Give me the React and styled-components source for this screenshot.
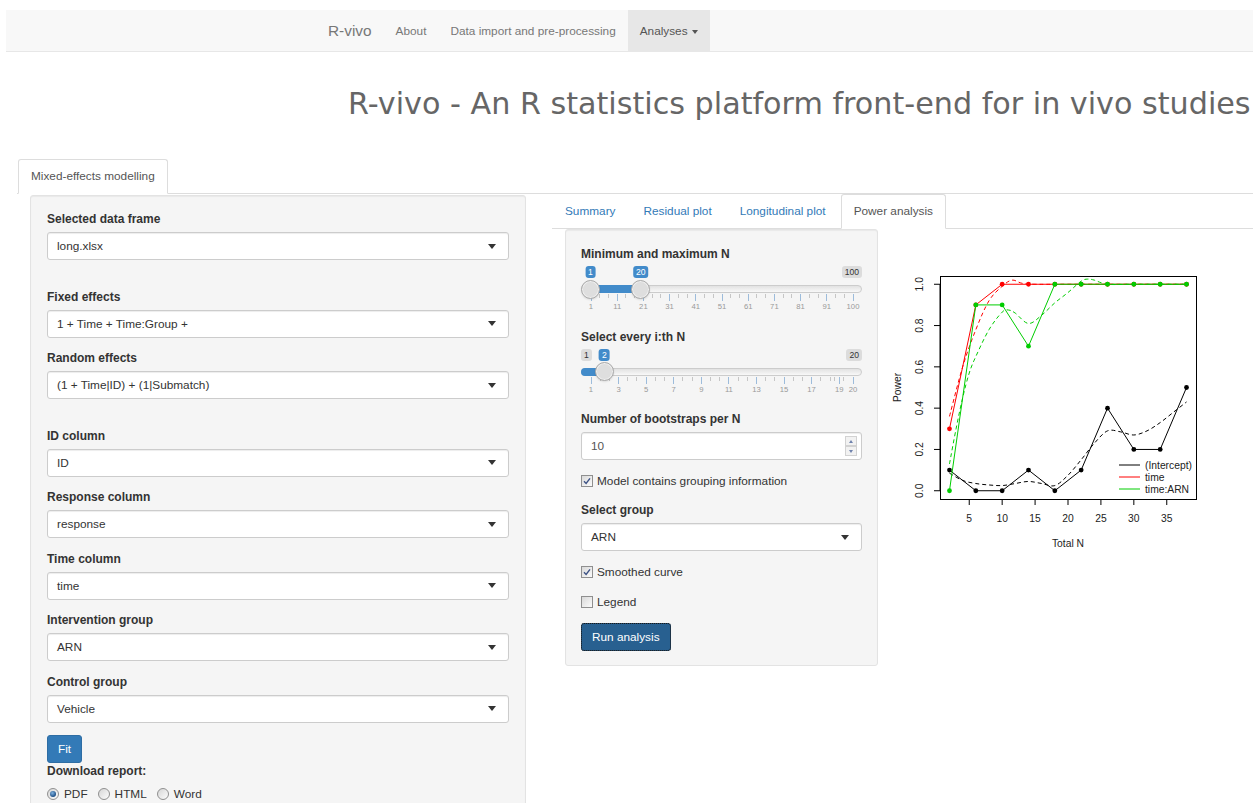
import React from 'react';
import styled, { createGlobalStyle } from 'styled-components';

const GlobalStyle = createGlobalStyle`
  html, body { margin: 0; padding: 0; background: #fff; overflow: hidden; }
  body {
    font-family: "Liberation Sans", Arial, sans-serif;
    font-size: 11.8px;
    color: #333;
  }
  * { box-sizing: border-box; }
`;

const Page = styled.div`
  padding-top: 10px;
  width: 1253px;
`;

/* ---------- navbar ---------- */
const Navbar = styled.nav`
  margin-left: 6px;
  height: 42px;
  display: flex;
  padding-left: 310px;
  background: #f8f8f8;
  border-bottom: 1px solid #e7e7e7;
`;

const Brand = styled.span`
  display: flex;
  align-items: center;
  padding: 0 12px;
  font-size: 15.4px;
  color: #777;
`;

const NavItem = styled.span`
  display: flex;
  align-items: center;
  padding: 0 12px;
  color: ${p => (p.$active ? '#555' : '#777')};
  background: ${p => (p.$active ? '#e7e7e7' : 'transparent')};
`;

const Caret = styled.span`
  display: inline-block;
  width: 0;
  height: 0;
  margin: 2px 0 0 4px;
  border-top: 4px solid #555;
  border-left: 3.5px solid transparent;
  border-right: 3.5px solid transparent;
`;

/* ---------- title + tabs ---------- */
const Title = styled.h1`
  margin: 34.5px 0 0;
  padding-left: 348px;
  font-family: "DejaVu Sans", Verdana, sans-serif;
  font-weight: normal;
  font-size: 30.2px;
  line-height: 33px;
  color: #666;
  white-space: nowrap;
`;

const TabList = styled.div`
  display: flex;
  height: 35px;
  border-bottom: 1px solid #ddd;
`;

const TopTabs = styled(TabList)`
  margin: 39.5px 0 0 17px;
  padding-left: 1px;
`;

const Tab = styled.span`
  height: 35px;
  line-height: 33px;
  padding: 0 12px;
  margin: 0 2px -1px 0;
  border: 1px solid ${p => (p.$active ? '#ddd' : 'transparent')};
  border-bottom-color: transparent;
  border-radius: 3px 3px 0 0;
  background: ${p => (p.$active ? '#fff' : 'transparent')};
  color: ${p => (p.$active ? '#555' : '#337ab7')};
`;

/* ---------- main columns ---------- */
const Main = styled.div`
  display: flex;
  align-items: flex-start;
  padding-left: 30px;
`;

const Well = styled.div`
  background: #f5f5f5;
  border: 1px solid #e3e3e3;
  border-radius: 3px;
  box-shadow: inset 0 1px 1px rgba(0, 0, 0, 0.05);
`;

const Sidebar = styled(Well)`
  width: 496px;
  margin: 1px 26px 0 0;
  padding: 15px 16px 20px;
`;

const Results = styled.div`
  flex: 1;
`;

const ResultsBody = styled.div`
  display: flex;
  align-items: flex-start;
  padding-left: 13px;
`;

const PowerWell = styled(Well)`
  width: 313px;
  padding: 16px 15px 14px;
`;

/* ---------- form parts ---------- */
const FormGroup = styled.div`
  margin-bottom: ${p => (p.$extra ? 28.5 : 12.5)}px;
`;

const Label = styled.div`
  font-weight: bold;
  font-size: 12px;
  line-height: 17px;
  margin-bottom: ${p => (p.$flush ? 0 : 4)}px;
`;

const SelectBox = styled.div`
  height: 28px;
  display: flex;
  align-items: center;
  justify-content: space-between;
  padding: 0 12px 0 9px;
  background: #fff;
  border: 1px solid #ccc;
  border-radius: 3px;
  box-shadow: inset 0 1px 1px rgba(0, 0, 0, 0.075);
  color: #333;
`;

const SelectArrow = styled.span`
  width: 0;
  height: 0;
  border-top: 5px solid #333;
  border-left: 4.5px solid transparent;
  border-right: 4.5px solid transparent;
`;

const NumberBox = styled(SelectBox)`
  padding-right: 4px;
  color: #555;
`;

const Spinner = styled.span`
  display: flex;
  flex-direction: column;
  width: 12px;
  height: 20px;
`;

const SpinButton = styled.span`
  flex: 1;
  display: flex;
  align-items: center;
  justify-content: center;
  background: #f2f2f2;
  border: 1px solid #d2d2d2;
  &::after {
    content: '';
    border-left: 2.5px solid transparent;
    border-right: 2.5px solid transparent;
    ${p => (p.$up ? 'border-bottom: 3px solid #7083ad;' : 'border-top: 3px solid #7083ad;')}
  }
`;

const Button = styled.button`
  height: 28px;
  padding: 0 10px;
  font-family: inherit;
  font-size: 11.8px;
  color: #fff;
  border-radius: 3px;
  background: ${p => (p.$pressed ? '#286090' : '#337ab7')};
  border: 1px solid ${p => (p.$pressed ? '#204d74' : '#2e6da4')};
  outline: ${p => (p.$pressed ? '1px dotted #1a1a1a' : 'none')};
  outline-offset: -1px;
`;

const CheckRow = styled.div`
  display: flex;
  align-items: center;
  height: 17px;
  margin-bottom: 12.5px;
`;

const CheckBox = styled.span`
  width: 12px;
  height: 12px;
  margin-right: 4px;
  display: inline-flex;
  align-items: center;
  justify-content: center;
  border: 1px solid #8f8f8f;
  background: linear-gradient(135deg, #d9d9d9, #fbfbfb);
`;

const RadioRow = styled.div`
  display: flex;
  align-items: center;
  height: 17px;
  margin-top: 5.5px;
`;

const RadioItem = styled.span`
  display: inline-flex;
  align-items: center;
  margin-right: 10px;
`;

const RadioDot = styled.span`
  width: 12px;
  height: 12px;
  margin-right: 5px;
  border-radius: 50%;
  display: inline-flex;
  align-items: center;
  justify-content: center;
  border: 1px solid #8f8f8f;
  background: linear-gradient(135deg, #d6d6d6, #fdfdfd);
  &::after {
    content: '';
    width: 6px;
    height: 6px;
    border-radius: 50%;
    background: ${p =>
      p.$checked ? 'radial-gradient(circle at 40% 35%, #7fb2e0, #1d4f86 70%)' : 'transparent'};
  }
`;

/* ---------- range slider ---------- */
const SliderBox = styled.div`
  position: relative;
  height: 49px;
`;

const EdgeLabel = styled.span`
  position: absolute;
  top: -1px;
  ${p => p.$side}: 0;
  height: 12px;
  line-height: 12px;
  padding: 0 3px;
  font-size: 8.6px;
  border-radius: 3px;
  background: rgba(0, 0, 0, 0.1);
  color: #333;
`;

const ValueBadge = styled.span`
  position: absolute;
  top: -1px;
  transform: translateX(-50%);
  height: 12px;
  line-height: 12px;
  padding: 0 3px;
  font-size: 8.6px;
  border-radius: 3px;
  background: #428bca;
  color: #fff;
`;

const Track = styled.div`
  position: absolute;
  left: 0;
  right: 0;
  top: 18px;
  height: 8px;
  border: 1px solid #ccc;
  border-radius: 8px;
  background: linear-gradient(#e2e2e2, #f8f8f8);
`;

const Bar = styled.div`
  position: absolute;
  top: 18px;
  height: 8px;
  background: #428bca;
  border-radius: ${p => (p.$fromEdge ? '8px 0 0 8px' : '0')};
`;

const Handle = styled.div`
  position: absolute;
  top: 12.5px;
  width: 19px;
  height: 19px;
  margin-left: -9.5px;
  border-radius: 50%;
  border: 1px solid #ababab;
  background: #dedede;
  box-shadow: inset 0 0 0 1px rgba(255, 255, 255, 0.5), 0 1px 2px rgba(0, 0, 0, 0.1);
`;

const GridTick = styled.span`
  position: absolute;
  top: 27px;
  width: 1px;
  height: ${p => (p.$big ? 7 : 4)}px;
  background: ${p => (p.$big ? '#9dbcdb' : '#c6c6c6')};
`;

const GridText = styled.span`
  position: absolute;
  top: 34px;
  line-height: 12px;
  font-size: 7.7px;
  color: #999;
  transform: translateX(-50%);
`;

const SLIDER_W = 281;
const HANDLE_W = 19;
const posOf = pct => HANDLE_W / 2 + pct * (SLIDER_W - HANDLE_W);

function Slider({ min, max, from, to, labels, bigNum, hideMin }) {
  const pct = v => (v - min) / (max - min);
  const bigP = 100 / bigNum;
  const smallMax = 2;
  const smallW = bigP / (smallMax + 1);
  const ticks = [];
  for (let i = 0; i < bigNum + 1; i++) {
    const bigW = Math.min(100, i * bigP);
    ticks.push({ p: bigW, big: true, label: labels[i] });
    if (bigW > 0) {
      for (let z = 1; z <= smallMax; z++) ticks.push({ p: bigW - smallW * z, big: false });
    }
  }
  const xFrom = posOf(pct(from));
  const xTo = to != null ? posOf(pct(to)) : null;

  return (
    <SliderBox>
      {!hideMin && <EdgeLabel $side="left">{min}</EdgeLabel>}
      <EdgeLabel $side="right">{max}</EdgeLabel>
      <Track />
      {xTo != null ? (
        <Bar style={{ left: xFrom, width: xTo - xFrom }} />
      ) : (
        <Bar $fromEdge style={{ left: 0, width: xFrom }} />
      )}
      {ticks.map((t, i) => (
        <GridTick key={i} $big={t.big} style={{ left: posOf(t.p / 100) }} />
      ))}
      {ticks
        .filter(t => t.big)
        .map((t, i) => (
          <GridText key={i} style={{ left: posOf(t.p / 100) + 0.5 }}>
            {t.label}
          </GridText>
        ))}
      <Handle style={{ left: xFrom }} />
      {xTo != null && <Handle style={{ left: xTo }} />}
      <ValueBadge style={{ left: xFrom }}>{from}</ValueBadge>
      {xTo != null && <ValueBadge style={{ left: xTo }}>{to}</ValueBadge>}
    </SliderBox>
  );
}

/* ---------- small pieces ---------- */
const Select = ({ value }) => (
  <SelectBox>
    <span>{value}</span>
    <SelectArrow />
  </SelectBox>
);

const Field = ({ label, value, extra }) => (
  <FormGroup $extra={extra}>
    <Label>{label}</Label>
    <Select value={value} />
  </FormGroup>
);

const CheckMark = () => (
  <svg width="8" height="8" viewBox="0 0 8 8">
    <path d="M1 4.3 L3.1 6.4 L7 1.4" stroke="#3c5184" strokeWidth="1.4" fill="none" />
  </svg>
);

const Check = ({ checked, children }) => (
  <CheckRow>
    <CheckBox>{checked && <CheckMark />}</CheckBox>
    <span>{children}</span>
  </CheckRow>
);

/* ---------- power plot ---------- */
const PlotSvg = styled.svg`
  display: block;
  margin: 29px 0 0 2px;
  font-family: "Liberation Sans", Arial, sans-serif;
`;

const X0 = 880;
const Y0 = 258;
const FR = { l: 940, r: 1196, t: 276, b: 499 };
const px = n => FR.l - X0 + ((n - 0.56) / 38.88) * (FR.r - FR.l);
const py = v => FR.t - Y0 + ((1.04 - v) / 1.08) * (FR.b - FR.t);

const Ns = [2, 6, 10, 14, 18, 22, 26, 30, 34, 38];

const SERIES = [
  {
    name: '(Intercept)',
    color: '#000000',
    values: [0.1, 0, 0, 0.1, 0, 0.1, 0.4, 0.2, 0.2, 0.5],
    smooth: [
      [2, 0.085], [4, 0.05], [6, 0.035], [8, 0.028], [10, 0.025], [12, 0.035], [14, 0.045],
      [16, 0.035], [18, 0.025], [20, 0.075], [22, 0.15], [24, 0.23], [26, 0.29], [28, 0.285],
      [30, 0.27], [32, 0.29], [34, 0.33], [36, 0.38], [38, 0.43],
    ],
  },
  {
    name: 'time',
    color: '#ff0000',
    values: [0.3, 0.9, 1, 1, 1, 1, 1, 1, 1, 1],
    smooth: [
      [2, 0.36], [4, 0.6], [6, 0.78], [8, 0.92], [10, 0.99], [11.5, 1.02], [13, 1.005],
      [15, 1.0], [20, 1.0], [38, 1.0],
    ],
  },
  {
    name: 'time:ARN',
    color: '#00cd00',
    values: [0, 0.9, 0.9, 0.7, 1, 1, 1, 1, 1, 1],
    smooth: [
      [2, 0.13], [3, 0.3], [4, 0.45], [5, 0.57], [6, 0.65], [8, 0.78], [10, 0.865],
      [11, 0.875], [12, 0.86], [14, 0.81], [16, 0.85], [18, 0.91], [20, 0.96], [22, 1.015],
      [23, 1.025], [24, 1.02], [26, 1.0], [30, 1.0], [38, 1.0],
    ],
  },
];

function smoothPath(pts) {
  const p = pts.map(([n, v]) => [px(n), py(v)]);
  let d = `M${p[0][0].toFixed(2)},${p[0][1].toFixed(2)}`;
  for (let i = 0; i < p.length - 1; i++) {
    const p0 = p[i - 1] || p[i];
    const p1 = p[i];
    const p2 = p[i + 1];
    const p3 = p[i + 2] || p2;
    const c1 = [p1[0] + (p2[0] - p0[0]) / 6, p1[1] + (p2[1] - p0[1]) / 6];
    const c2 = [p2[0] - (p3[0] - p1[0]) / 6, p2[1] - (p3[1] - p1[1]) / 6];
    d += ` C${c1[0].toFixed(2)},${c1[1].toFixed(2)} ${c2[0].toFixed(2)},${c2[1].toFixed(2)} ${p2[0].toFixed(2)},${p2[1].toFixed(2)}`;
  }
  return d;
}

function PowerPlot() {
  const fw = FR.r - FR.l;
  const fh = FR.b - FR.t;
  const left = FR.l - X0;
  const top = FR.t - Y0;
  const bottom = top + fh;
  const yTicks = [0, 0.2, 0.4, 0.6, 0.8, 1.0];
  const xTicks = [5, 10, 15, 20, 25, 30, 35];
  return (
    <PlotSvg width="330" height="300" viewBox="0 0 330 300">
      <g stroke="#000" strokeWidth="1" fill="none">
        <rect x={left + 0.5} y={top + 0.5} width={fw} height={fh} />
        {yTicks.map(v => (
          <line key={v} x1={left - 6} x2={left} y1={py(v)} y2={py(v)} />
        ))}
        <line x1={left} x2={left} y1={py(0)} y2={py(1)} />
        {xTicks.map(n => (
          <line key={n} x1={px(n)} x2={px(n)} y1={bottom} y2={bottom + 6} />
        ))}
      </g>
      <g fontSize="10.3" fill="#222" textAnchor="middle">
        {yTicks.map(v => (
          <text key={v} x={40} y={py(v)} dominantBaseline="central" transform={`rotate(-90 40 ${py(v)})`}>
            {v.toFixed(1)}
          </text>
        ))}
        {xTicks.map(n => (
          <text key={n} x={px(n)} y={260} dominantBaseline="central">
            {n}
          </text>
        ))}
        <text x={left + fw / 2} y={285} dominantBaseline="central">
          Total N
        </text>
        <text x={17} y={top + fh / 2} dominantBaseline="central" transform={`rotate(-90 17 ${top + fh / 2})`}>
          Power
        </text>
      </g>
      {SERIES.map(s => (
        <g key={s.name}>
          <polyline
            points={Ns.map((n, i) => `${px(n)},${py(s.values[i])}`).join(' ')}
            fill="none"
            stroke={s.color}
            strokeWidth="1"
          />
          {Ns.map((n, i) => (
            <circle key={n} cx={px(n)} cy={py(s.values[i])} r="2.4" fill={s.color} />
          ))}
          <path d={smoothPath(s.smooth)} fill="none" stroke={s.color} strokeWidth="1" strokeDasharray="4 3" />
        </g>
      ))}
      <g fontSize="10.3" fill="#222">
        {SERIES.map((s, i) => (
          <g key={s.name}>
            <line x1={239} x2={260} y1={207 + i * 12} y2={207 + i * 12} stroke={s.color} strokeWidth="1" />
            <text x={265} y={207 + i * 12} dominantBaseline="central">
              {s.name}
            </text>
          </g>
        ))}
      </g>
    </PlotSvg>
  );
}

/* ---------- page ---------- */
export default function App() {
  return (
    <Page>
      <GlobalStyle />
      <Navbar>
        <Brand>R-vivo</Brand>
        <NavItem>About</NavItem>
        <NavItem>Data import and pre-processing</NavItem>
        <NavItem $active>
          Analyses
          <Caret />
        </NavItem>
      </Navbar>

      <Title>R-vivo - An R statistics platform front-end for in vivo studies</Title>

      <TopTabs>
        <Tab $active>Mixed-effects modelling</Tab>
      </TopTabs>

      <Main>
        <Sidebar>
          <Field label="Selected data frame" value="long.xlsx" extra />
          <Field label="Fixed effects" value="1 + Time + Time:Group +" />
          <Field label="Random effects" value="(1 + Time|ID) + (1|Submatch)" extra />
          <Field label="ID column" value="ID" />
          <Field label="Response column" value="response" />
          <Field label="Time column" value="time" />
          <Field label="Intervention group" value="ARN" />
          <Field label="Control group" value="Vehicle" />
          <Button>Fit</Button>
          <Label $flush>Download report:</Label>
          <RadioRow>
            <RadioItem>
              <RadioDot $checked />
              PDF
            </RadioItem>
            <RadioItem>
              <RadioDot />
              HTML
            </RadioItem>
            <RadioItem>
              <RadioDot />
              Word
            </RadioItem>
          </RadioRow>
        </Sidebar>

        <Results>
          <TabList>
            <Tab>Summary</Tab>
            <Tab>Residual plot</Tab>
            <Tab>Longitudinal plot</Tab>
            <Tab $active>Power analysis</Tab>
          </TabList>
          <ResultsBody>
            <PowerWell>
              <FormGroup>
                <Label>Minimum and maximum N</Label>
                <Slider
                  min={1}
                  max={100}
                  from={1}
                  to={20}
                  bigNum={10}
                  hideMin
                  labels={[1, 11, 21, 31, 41, 51, 61, 71, 81, 91, 100]}
                />
              </FormGroup>
              <FormGroup>
                <Label>Select every i:th N</Label>
                <Slider
                  min={1}
                  max={20}
                  from={2}
                  bigNum={9.5}
                  labels={[1, 3, 5, 7, 9, 11, 13, 15, 17, 19, 20]}
                />
              </FormGroup>
              <FormGroup>
                <Label>Number of bootstraps per N</Label>
                <NumberBox>
                  <span>10</span>
                  <Spinner>
                    <SpinButton $up />
                    <SpinButton />
                  </Spinner>
                </NumberBox>
              </FormGroup>
              <Check checked>Model contains grouping information</Check>
              <Field label="Select group" value="ARN" />
              <Check checked>Smoothed curve</Check>
              <Check>Legend</Check>
              <Button $pressed>Run analysis</Button>
            </PowerWell>
            <PowerPlot />
          </ResultsBody>
        </Results>
      </Main>
    </Page>
  );
}
